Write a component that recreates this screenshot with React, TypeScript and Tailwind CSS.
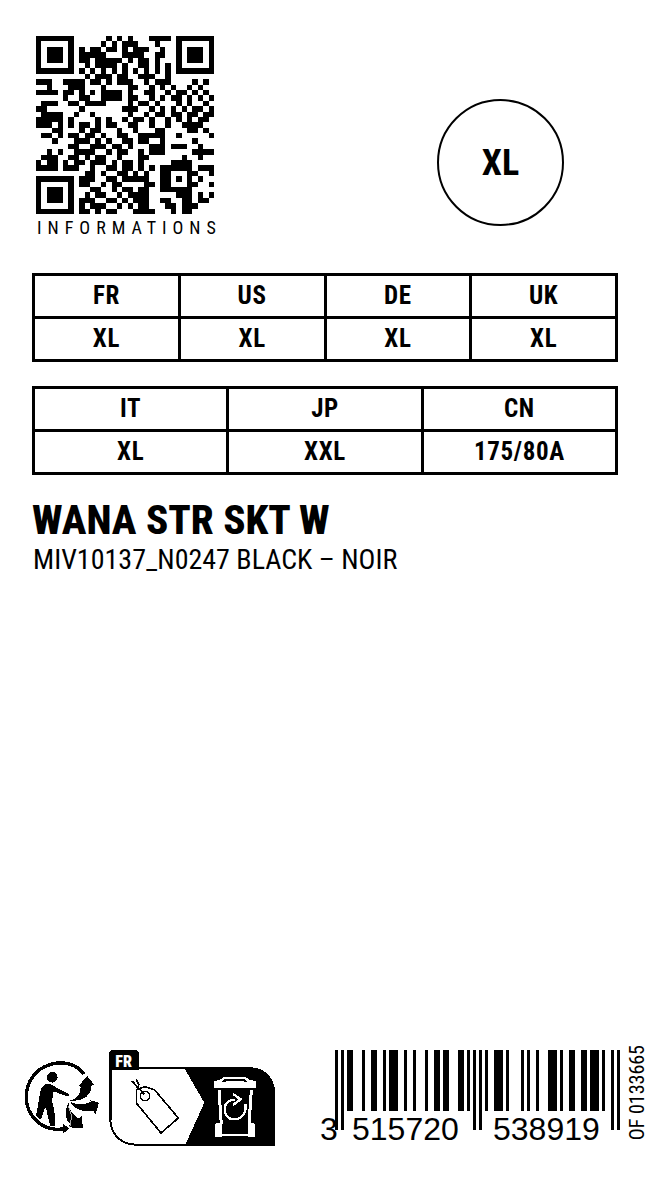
import React from "react";

const QR_ROWS = [
  "11111110" + "000001010" + "10001111" + "01111111",
  "10000010" + "000010101" + "11000100" + "01000001",
  "10111010" + "101101101" + "01110010" + "01011101",
  "10111010" + "111110001" + "11100110" + "01011101",
  "10111010" + "110111110" + "10110100" + "01011101",
  "10000010" + "010111101" + "00110101" + "01000001",
  "11111110" + "101010101" + "01010101" + "01111111",
  "00000000" + "010111011" + "00111001" + "00000000",
  "11100111" + "101101011" + "10010111" + "00001010",
  "00100011" + "100010000" + "11001010" + "10010100",
  "11110110" + "101011110" + "10011001" + "01101010",
  "00000100" + "110011110" + "11001010" + "11010101",
  "01110011" + "011110000" + "10110100" + "01010010",
  "11000000" + "100000001" + "11001010" + "10101101",
  "01111001" + "001000000" + "10010110" + "11011011",
  "11111010" + "000101001" + "01101001" + "01010110",
  "11101010" + "110101100" + "11001001" + "00111100",
  "00011000" + "101100010" + "01000110" + "00011010",
  "01101011" + "011010011" + "00111110" + "01000001",
  "00010001" + "110101001" + "10110010" + "00001000",
  "00000011" + "001110110" + "10001110" + "11100100",
  "00101001" + "111001011" + "00101110" + "00001111",
  "01110011" + "010110010" + "00110000" + "00100100",
  "10110101" + "101110101" + "10100000" + "11110000",
  "11110111" + "001001101" + "10101011" + "11110111",
  "00000000" + "011010011" + "01010011" + "00011001",
  "11111110" + "111001101" + "11110011" + "01010100",
  "10000010" + "110010110" + "00011011" + "00011001",
  "10111010" + "001100101" + "10110011" + "11110000",
  "10111010" + "010110010" + "11110000" + "01110101",
  "10111010" + "111001101" + "01110011" + "00110110",
  "10000010" + "101110010" + "10110001" + "10111000",
  "11111110" + "110101100" + "01111000" + "10110000",
];

function QrCode() {
  return (
    <svg viewBox="0 0 33 33" className="w-[178px] h-[178px]" shapeRendering="crispEdges" role="img" aria-label="QR code">
      {QR_ROWS.map((row, y) =>
        row.split("").map((cell, x) => (cell === "1" ? <rect key={`${x}-${y}`} x={x} y={y} width="1" height="1" /> : null)),
      )}
    </svg>
  );
}

function SizeTable({ heads, sizes }: { heads: string[]; sizes: string[] }) {
  return (
    <table className="w-full table-fixed border-collapse border-[3px] border-black text-center text-[25px] font-bold leading-6 tracking-wide">
      <thead>
        <tr className="h-[43px]">
          {heads.map((h) => (
            <th key={h} scope="col" className="border-[3px] border-black p-0">{h}</th>
          ))}
        </tr>
      </thead>
      <tbody>
        <tr className="h-[43px]">
          {sizes.map((s, i) => (
            <td key={i} className="border-[3px] border-black p-0">{s}</td>
          ))}
        </tr>
      </tbody>
    </table>
  );
}

const L_CODES = ["0001101", "0011001", "0010011", "0111101", "0100011", "0110001", "0101111", "0111011", "0110111", "0001011"];
const PARITY = ["LLLLLL", "LLGLGG", "LLGGLG", "LLGGGL", "LGLLGG", "LGGLLG", "LGGGLL", "LGLGLG", "LGLGGL", "LGGLGL"];
const invert = (s: string) => s.split("").map((c) => (c === "1" ? "0" : "1")).join("");
const reverse = (s: string) => s.split("").reverse().join("");

function encodeEan13(code: string) {
  const d = code.split("").map(Number);
  const parity = PARITY[d[0]];
  const left = d.slice(1, 7).map((n, i) => (parity[i] === "L" ? L_CODES[n] : reverse(invert(L_CODES[n])))).join("");
  const right = d.slice(7).map((n) => invert(L_CODES[n])).join("");
  return "101" + left + "01010" + right + "101";
}

function Barcode({ code }: { code: string }) {
  const bits = encodeEan13(code);
  return (
    <svg viewBox="0 0 304 100" className="w-[304px] h-[100px]" shapeRendering="crispEdges" role="img" aria-label={`Barcode ${code}`}>
      {bits.split("").map((b, i) => {
        const guard = i < 3 || i > 91 || (i > 44 && i < 50);
        return b === "1" ? <rect key={i} x={15 + i * 3} y="0" width="3" height={guard ? 80 : 61} /> : null;
      })}
      <g fontFamily="Liberation Sans, sans-serif" fontSize="32">
        <text x="0" y="90">{code.slice(0, 1)}</text>
        <text x="32" y="90">{code.slice(1, 7)}</text>
        <text x="173" y="90">{code.slice(7)}</text>
      </g>
    </svg>
  );
}

function Triman() {
  return (
    <svg viewBox="30 80 225 219" className="w-[75px] h-[73px]" shapeRendering="crispEdges" role="img" aria-label="Triman">
      <path d="M207 119C185 89 143 78 104 91C60 105 32 145 34 193C36 242 76 283 124 285L148 284" fill="none" stroke="#000" strokeWidth="10" />
      <path d="M143 267L163 283L144 298Z" />
      <circle cx="112" cy="129" r="16" />
      <path d="M84 156C88 150 96 148 104 149C110 150 116 154 122 159L160 178C164 182 161 187 156 186L116 171L111 200C118 220 121 248 120 276L106 276L94 226L90 218L78 256L63 245C69 220 72 190 76 170C78 164 80 160 84 156Z" />
      <path d="M163 199C184 196 196 182 197 160L192 153L217 125L238 152L230 153C230 183 202 205 163 199Z" />
      <path d="M165 202C186 213 208 210 229 203L224 197L252 205L242 240L235 229C208 235 180 228 165 202Z" />
      <path d="M160 205C148 232 148 256 166 268L159 279L204 281L200 246L190 252C174 242 162 226 160 205Z" />
      <path d="M160 216L170 244L163 287" fill="none" stroke="#fff" strokeWidth="2" />
    </svg>
  );
}

function SortingPanel() {
  return (
    <svg viewBox="282 28 498 291" className="w-[166px] h-[97px]" shapeRendering="crispEdges" role="img" aria-label="FR sorting instructions">
      <path d="M286 86H706C748 86 778 118 778 164V315H362C318 315 286 282 286 240Z" fill="#fff" stroke="#000" strokeWidth="6" />
      <path d="M286 90V240" stroke="#000" strokeWidth="9" />
      <path d="M508 86H706C748 86 780 118 780 164V317H510L568 189Z" />
      <path d="M282 92V44Q282 30 296 30H358Q372 30 372 44V92Z" />
      <text x="301" y="83" fill="#fff" fontFamily="Roboto Condensed, Roboto, sans-serif" fontWeight="900" fontSize="48">FR</text>
      <g fill="none" stroke="#000" strokeWidth="5">
        <path d="M364 150L389 141L419 151L490 235L438 280L364 190Z" />
        <circle cx="390" cy="169" r="14" />
        <path d="M351 124L388 164M363 119L372 135L366 146" />
      </g>
      <g fill="none" stroke="#fff">
        <path d="M600 143V127L617 122L627 114H690L702 122L720 127V143Z" fill="#fff" strokeWidth="5" />
        <path d="M618 127L628 119H688L698 127Z" fill="#000" stroke="none" />
        <path d="M632 124H686" strokeWidth="3" />
        <path d="M612 152L619 254M709 152L702 254" strokeWidth="9" />
        <path d="M618 286H703" strokeWidth="8" />
        <path d="M602 289V258Q602 252 610 252H620V289ZM718 289V258Q718 252 710 252H700V289Z" fill="#fff" strokeWidth="4" />
        <path d="M691 193C696 219 680 239 658 239C638 239 628 224 629 207C630 190 642 180 661 180" strokeWidth="7" />
        <path d="M654 163L677 179L654 196" strokeWidth="7" />
      </g>
    </svg>
  );
}

export default function App() {
  return (
    <main className="flex min-h-screen flex-col bg-white pl-8 pr-[42px] pt-9 font-['Roboto_Condensed','Roboto',sans-serif] text-black">
      <header className="flex items-start justify-between pl-1 pr-[54px]">
        <div className="flex flex-col">
          <QrCode />
          <p className="-mr-2 mt-1 whitespace-nowrap pl-px text-lg leading-5 tracking-[6px]">INFORMATIONS</p>
        </div>
        <div className="mt-[63px] flex size-[127px] items-center justify-center rounded-full border-2 border-black text-4xl font-bold">XL</div>
      </header>

      <section className="mt-[35px] flex flex-col gap-6">
        <SizeTable heads={["FR", "US", "DE", "UK"]} sizes={["XL", "XL", "XL", "XL"]} />
        <SizeTable heads={["IT", "JP", "CN"]} sizes={["XL", "XXL", "175/80A"]} />
      </section>

      <section className="mt-[25px] whitespace-nowrap">
        <h1 className="text-[41px] font-extrabold leading-10">WANA STR SKT W</h1>
        <p className="pl-px text-[28px] leading-10">MIV10137_N0247 BLACK – NOIR</p>
      </section>

      <footer className="-ml-[7px] -mr-[29px] mt-auto flex items-end justify-between pb-[50px]">
        <div className="flex items-center gap-[9px] pb-1">
          <Triman />
          <SortingPanel />
        </div>
        <div className="flex items-end gap-[3px]">
          <Barcode code="3515720538919" />
          <p className="mb-[10px] rotate-180 whitespace-nowrap text-xl leading-5 [writing-mode:vertical-rl]">OF 0133665</p>
        </div>
      </footer>
    </main>
  );
}
